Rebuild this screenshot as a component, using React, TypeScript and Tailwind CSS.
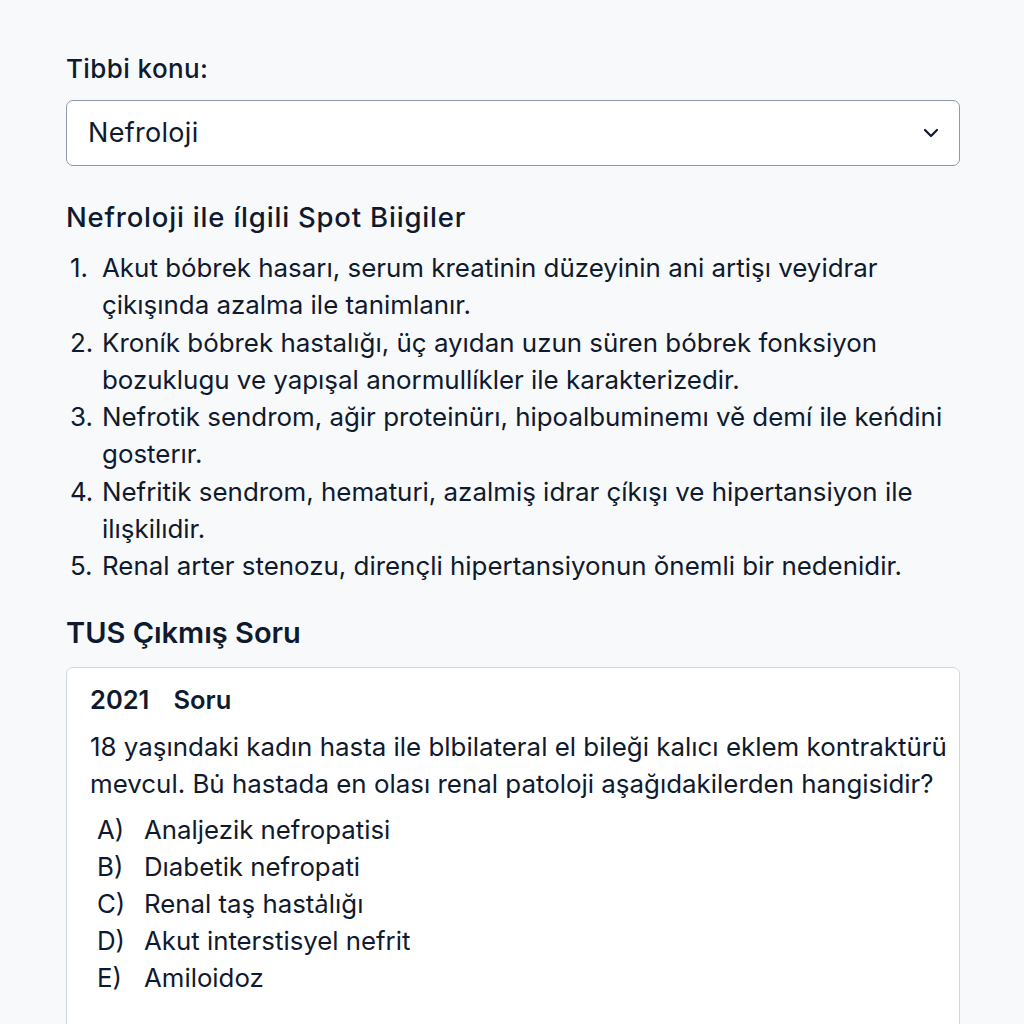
import React from "react";

const spots: React.ReactNode[] = [
  <>Akut bóbrek hasarı, serum kreatinin düzeyinin ani artişı veyidrar<br />çikışında azalma ile tanimlanır.</>,
  <>Kroník bóbrek hastalığı, üç ayıdan uzun süren bóbrek fonksiyon<br />bozuklugu ve yapışal anormullíkler ile karakterizedir.</>,
  <>Nefrotik sendrom, ağir proteinürı, hipoalbuminemı vě demí ile keńdini<br />gosterır.</>,
  <>Nefritik sendrom, hematuri, azalmiş idrar çíkışı ve hipertansiyon ile<br />ilışkilıdir.</>,
  <>Renal arter stenozu, dirençli hipertansiyonun ǒnemli bir nedenidir.</>,
];

const options = [
  ["A)", "Analjezik nefropatisi"],
  ["B)", "Dıabetik nefropati"],
  ["C)", "Renal taş hasta\u030Dlığı"],
  ["D)", "Akut interstisyel nefrit"],
  ["E)", "Amiloidoz"],
];

export default function App() {
  return (
    <div
      className="min-h-screen bg-[#f8f9fa] text-[#0f1a2e] pl-[66px] pr-[64px] pt-[50px]"
      style={{ fontFamily: "Inter, 'Noto Sans', sans-serif" }}
    >
      <div className="text-[26px] leading-[37px] font-medium tracking-[0.4px]">Tibbi konu:</div>
      <div className="mt-[13px] h-[66px] rounded-[7px] border border-[#8d99a8] bg-white flex items-center justify-between pl-[21px] pr-[20px]">
        <span className="text-[27px] tracking-[0.3px]">Nefroloji</span>
        <svg width="16" height="10" viewBox="0 0 16 10" fill="none">
          <path d="M2 2l6 6 6-6" stroke="#0f1a2e" strokeWidth="2.2" strokeLinecap="round" strokeLinejoin="round" />
        </svg>
      </div>
      <h2 className="mt-[33px] text-[27.5px] leading-[37px] font-medium tracking-[0.8px]">Nefroloji ile ílgili Spot Biigiler</h2>
      <ol className="mt-[13px] text-[25.9px] leading-[37.3px]">
        {spots.map((s, i) => (
          <li key={i} className="flex">
            <span className="w-[36px] shrink-0 pl-[4px]">{i + 1}.</span>
            <span>{s}</span>
          </li>
        ))}
      </ol>
      <h2 className="mt-[29px] text-[29px] leading-[37px] font-semibold">TUS Çıkmış Soru</h2>
      <div className="mt-[16px] rounded-[7px] border border-[#cfd8e2] bg-white pl-[23px] pr-[6px] pt-[13px] pb-[40px]">
        <div className="text-[25.5px] leading-[37px] font-semibold flex gap-[24px]">
          <span>2021</span>
          <span>Soru</span>
        </div>
        <p className="mt-[10px] text-[25.9px] leading-[37px] whitespace-nowrap">
          18 yaşındaki kadın hasta ile blbilateral el bileği kalıcı eklem kontraktürü
          <br />
          mevcul. Bu̇ hastada en olası renal patoloji aşağıdakilerden hangisidir?
        </p>
        <div className="mt-[9px] text-[25.8px] leading-[37px]">
          {options.map(([l, t]) => (
            <div key={l} className="flex">
              <span className="w-[54px] shrink-0 pl-[7px]">{l}</span>
              <span>{t}</span>
            </div>
          ))}
        </div>
      </div>
    </div>
  );
}
